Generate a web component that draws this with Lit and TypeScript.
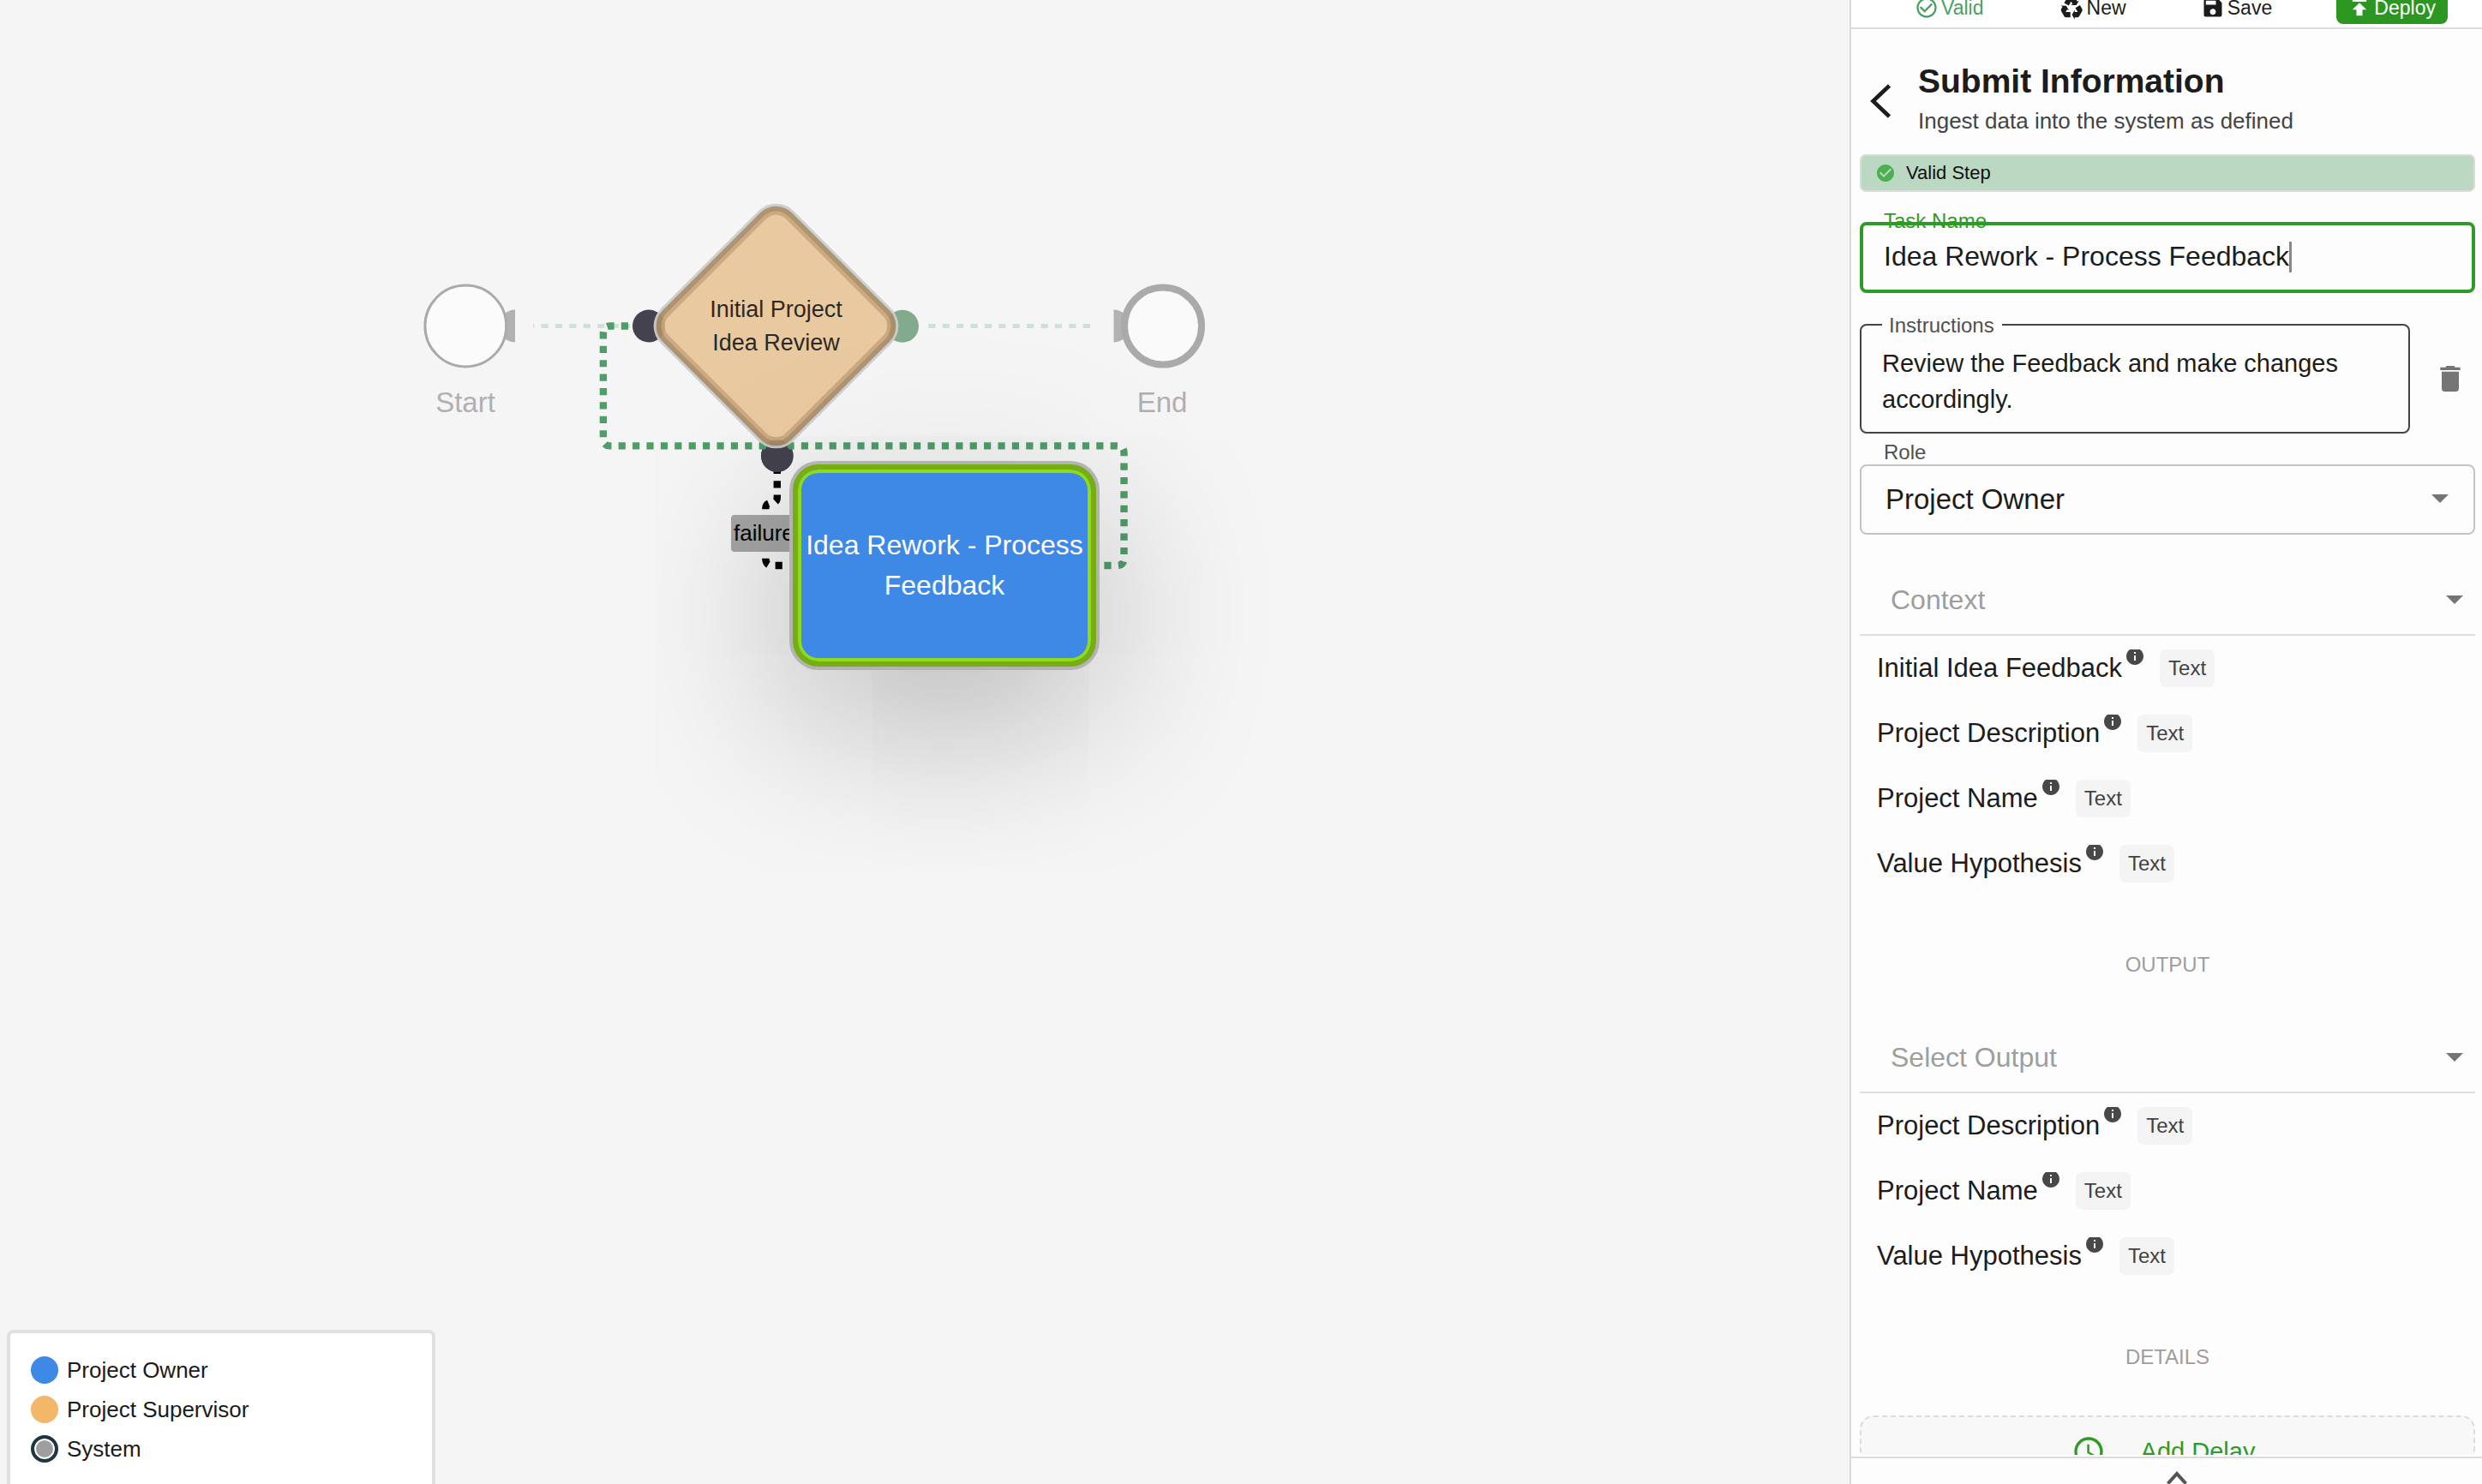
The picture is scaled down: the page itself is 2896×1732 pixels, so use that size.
import { LitElement, html, css, svg } from "lit";
import { customElement, property } from "lit/decorators.js";

const PATHS = {
  valid:
    "M16.59 7.58L10 14.17l-3.59-3.58L5 12l5 5 8-8zM12 2C6.48 2 2 6.48 2 12s4.48 10 10 10 10-4.48 10-10S17.52 2 12 2zm0 18c-4.42 0-8-3.58-8-8s3.58-8 8-8 8 3.58 8 8-3.58 8-8 8z",
  recycle:
    "M21.82 15.42L19.32 19.75C18.83 20.61 17.92 21.06 17 21H15V23L12.5 18.5L15 14V16H17.82L15.6 12.15L19.93 9.65L21.73 12.77C22.25 13.54 22.32 14.57 21.82 15.42M9.21 3.06H14.21C15.19 3.06 16.04 3.63 16.45 4.45L17.45 6.19L19.18 5.19L16.54 9.6L11.39 9.69L13.12 8.69L11.71 6.24L9.5 10.09L5.16 7.59L6.96 4.47C7.37 3.64 8.22 3.06 9.21 3.06M5.05 19.76L2.55 15.43C2.06 14.58 2.13 13.56 2.64 12.79L3.64 11.06L1.91 10.06L7.05 10.14L9.7 14.56L7.97 13.56L6.56 16H11V21H7.4C6.47 21.07 5.55 20.61 5.05 19.76Z",
  save:
    "M17 3H5c-1.11 0-2 .9-2 2v14c0 1.1.89 2 2 2h14c1.1 0 2-.9 2-2V7l-4-4zm-5 16c-1.66 0-3-1.34-3-3s1.34-3 3-3 3 1.34 3 3-1.34 3-3 3zm3-10H5V5h10v4z",
  deploy: "M5 4v2h14V4H5zm0 10h4v6h6v-6h4l-7-7-7 7z",
  check:
    "M12 2C6.48 2 2 6.48 2 12s4.48 10 10 10 10-4.48 10-10S17.52 2 12 2zm-2 15l-5-5 1.41-1.41L10 14.17l7.59-7.59L19 8l-9 9z",
  trash: "M6 19c0 1.1.9 2 2 2h8c1.1 0 2-.9 2-2V7H6v12zM19 4h-3.5l-1-1h-5l-1 1H5v2h14V4z",
  info:
    "M12 2C6.48 2 2 6.48 2 12s4.48 10 10 10 10-4.48 10-10S17.52 2 12 2zm1 15h-2v-6h2v6zm0-8h-2V7h2v2z",
  clock:
    "M11.99 2C6.47 2 2 6.48 2 12s4.47 10 9.99 10C17.52 22 22 17.52 22 12S17.52 2 11.99 2zM12 20c-4.42 0-8-3.58-8-8s3.58-8 8-8 8 3.58 8 8-3.58 8-8 8zm.5-13H11v6l5.25 3.15.75-1.23-4.5-2.67z",
};

const icon = (d: string, size: number) => html`
  <svg width=${size} height=${size} viewBox="0 0 24 24" fill="currentColor" aria-hidden="true">
    <path d=${d}></path>
  </svg>
`;

const base = css`
  *,
  *::before,
  *::after {
    box-sizing: border-box;
  }
  svg {
    display: block;
    flex: none;
  }
  button,
  input,
  select,
  textarea {
    font: inherit;
    color: inherit;
    margin: 0;
    padding: 0;
    border: 0;
    background: none;
    outline: none;
  }
`;

@customElement("flow-canvas")
export class FlowCanvas extends LitElement {
  static styles = [
    base,
    css`
      :host {
        display: block;
        position: relative;
        overflow: hidden;
        background: #f5f5f5;
      }
      .wires {
        position: absolute;
        inset: 0;
        width: 100%;
        height: 100%;
      }
      .wire {
        fill: none;
        stroke-dasharray: 8.2 8.2;
      }
      .faint {
        stroke: #d0e0d7;
        stroke-width: 5;
      }
      .success {
        stroke: #4f9d69;
        stroke-width: 8.4;
      }
      .failure {
        stroke: #000;
        stroke-width: 8.4;
      }
      .caption {
        position: absolute;
        top: 446px;
        width: 160px;
        text-align: center;
        font-size: 33px;
        line-height: 48px;
        color: #b0b0b0;
      }
      .start {
        left: 463px;
      }
      .end {
        left: 1276px;
      }
      .decision {
        position: absolute;
        left: 765px;
        top: 240px;
        width: 281px;
        height: 281px;
        display: grid;
        place-items: center;
      }
      .diamond {
        grid-area: 1 / 1;
        width: 213px;
        height: 213px;
        border-radius: 26px;
        border: 6px solid #ac8d68;
        background: #e9c79a;
        box-shadow:
          0 0 0 3px #cdcdcd,
          inset 0 0 0 4px #c9a67b;
        opacity: 0.94;
        transform: rotate(45deg);
      }
      .decision-text {
        grid-area: 1 / 1;
        z-index: 1;
        width: 170px;
        text-align: center;
        font-size: 27px;
        line-height: 39px;
        color: #2b2926;
      }
      .tag {
        position: absolute;
        left: 853px;
        top: 601px;
        padding: 0 3px;
        font-size: 26px;
        line-height: 43px;
        border-radius: 4px;
        background: #a6a6a6;
        color: #000;
      }
      .task {
        position: absolute;
        left: 925px;
        top: 542px;
        width: 354px;
        height: 236px;
        display: flex;
        align-items: center;
        justify-content: center;
        text-align: center;
        font-size: 32px;
        line-height: 47px;
        color: #fff;
        border: 6px solid #76ad12;
        border-radius: 30px;
        background: #3d89e5;
        box-shadow:
          inset 0 0 0 4px #8fdb1a,
          0 0 0 4px #b3b3b3,
          0 56px 200px rgba(0, 0, 0, 0.28);
      }
      .legend {
        position: absolute;
        left: 8px;
        bottom: -8px;
        width: 500px;
        margin: 0;
        padding: 20px 24px 22px;
        list-style: none;
        border: 4px solid #e0e0e0;
        border-radius: 8px;
        background: #fff;
        font-size: 26px;
        line-height: 46px;
        color: #1b1b1b;
      }
      .legend-row {
        display: flex;
        align-items: center;
        gap: 10px;
      }
      .dot {
        width: 32px;
        height: 32px;
        border-radius: 50%;
      }
      .owner {
        background: #3d89e5;
      }
      .supervisor {
        background: #f3b769;
      }
      .system {
        border: 4px solid #1f3541;
        background: #9e9e9e;
        box-shadow: inset 0 0 0 2px #fff;
      }
    `,
  ];

  render() {
    return html`
      <svg class="wires" aria-hidden="true">
        ${svg`
          <path class="wire faint" stroke-dashoffset="6.9" d="M622 380.5H735"></path>
          <path class="wire faint" d="M1083.3 380.6H1273"></path>
          <path fill="#b2b2b2" d="M601 361.5a19 19 0 0 0 0 38z"></path>
          <circle cx="543.3" cy="380.5" r="47.4" fill="#fbfbfb" stroke="#aaa" stroke-width="3"></circle>
          <path fill="#b2b2b2" d="M1299.5 361.5a19 19 0 0 1 0 38z"></path>
          <circle cx="1357" cy="380.5" r="45" fill="#fafafa" stroke="#aaa" stroke-width="8"></circle>
          <circle cx="757" cy="380.5" r="19" fill="#45424f"></circle>
          <circle cx="1053" cy="380.7" r="19" fill="#82ab8e"></circle>
          <circle cx="906.8" cy="532" r="19.5" fill="#45424f" stroke="#fff" stroke-width="1"></circle>
          <path
            class="wire success"
            d="M1272 660H1303.3Q1311.5 660 1311.5 651.8V528.6Q1311.5 520.4 1303.3 520.4H712.1Q703.9 520.4 703.9 512.2V388.7Q703.9 380.5 712.1 380.5H738"
          ></path>
          <path
            class="wire failure"
            d="M906.8 544.8V580.3Q906.8 587 900 587Q893.3 587 893.3 593.7V651.8Q893.3 660 901.5 660H940"
          ></path>
          <circle cx="906.8" cy="534" r="17" fill="#45424f"></circle>
        `}
      </svg>
      <div class="caption start">Start</div>
      <div class="caption end">End</div>
      <div class="decision">
        <div class="diamond"></div>
        <div class="decision-text">Initial Project Idea Review</div>
      </div>
      <div class="tag">failure</div>
      <div class="task">Idea Rework - Process Feedback</div>
      <ul class="legend">
        <li class="legend-row"><span class="dot owner"></span>Project Owner</li>
        <li class="legend-row"><span class="dot supervisor"></span>Project Supervisor</li>
        <li class="legend-row"><span class="dot system"></span>System</li>
      </ul>
    `;
  }
}

@customElement("variable-list")
export class VariableList extends LitElement {
  @property({ attribute: false }) items: string[] = [];

  static styles = [
    base,
    css`
      :host {
        display: block;
      }
      .list {
        display: flex;
        flex-direction: column;
        gap: 32px;
        margin: 0;
        padding: 16px 20px 0;
        list-style: none;
      }
      .row {
        display: flex;
        align-items: center;
        height: 44px;
        font-size: 31px;
        color: #1c1c1c;
      }
      .info {
        align-self: flex-start;
        margin: 0 19px 0 5px;
        color: #484848;
      }
      .chip {
        padding: 0 10px;
        border-radius: 7px;
        background: #f4f4f5;
        color: #424242;
        font-size: 24px;
        line-height: 44px;
      }
    `,
  ];

  render() {
    return html`
      <ul class="list">
        ${this.items.map(
          (name) => html`
            <li class="row">
              <span>${name}</span>
              <svg class="info" width="20" height="18" viewBox="2 4 20 18" fill="currentColor" aria-hidden="true">
                <path d=${PATHS.info}></path>
              </svg>
              <span class="chip">Text</span>
            </li>
          `,
        )}
      </ul>
    `;
  }
}

@customElement("step-panel")
export class StepPanel extends LitElement {
  static styles = [
    base,
    css`
      :host {
        display: flex;
        flex-direction: column;
        min-height: 0;
        border-left: 2px solid #dcdcdc;
        background: #fdfdfd;
        color: #1c1c1c;
      }
      .toolbar {
        flex: none;
        display: flex;
        justify-content: space-between;
        align-items: flex-end;
        height: 34px;
        padding: 0 40px 4px 62px;
        overflow: hidden;
        border-bottom: 2px solid #dcdcdc;
        background: #fff;
        font-size: 23px;
      }
      .tool {
        display: flex;
        align-items: center;
        gap: 3px;
        height: 38px;
        padding: 0 12px;
        border-radius: 8px;
      }
      .tool.valid {
        color: #4a9f63;
      }
      .tool.deploy {
        padding: 0 14px 0 13px;
        background: #2b9720;
        color: #fff;
      }
      .body {
        flex: 1;
        min-height: 0;
        overflow: hidden;
        padding: 38px 8px 0 10px;
      }
      .header {
        display: grid;
        grid-template-columns: 68px 1fr;
        align-items: center;
      }
      .back {
        padding: 0 0 0 10px;
        justify-self: start;
      }
      .title {
        margin: 0;
        font-size: 39px;
        line-height: 46px;
        font-weight: 700;
      }
      .subtitle {
        margin: 0;
        font-size: 26px;
        line-height: 46px;
        color: #444;
      }
      .banner {
        display: flex;
        align-items: center;
        gap: 12px;
        height: 44px;
        margin-top: 16px;
        padding: 0 16px;
        border: 2px solid #d9dcd9;
        border-radius: 7px;
        background: #bad8c2;
        color: #111;
        font-size: 22px;
      }
      .banner svg {
        color: #4caf50;
      }
      .field {
        position: relative;
      }
      .label {
        font-size: 24px;
        line-height: 28px;
        color: #505050;
      }
      .name {
        z-index: 0;
        display: flex;
        align-items: center;
        height: 83px;
        margin-top: 35px;
        padding: 0 24px 2px;
        border: 4px solid #2f9a26;
        border-radius: 8px;
        font-size: 32px;
      }
      .name .label {
        position: absolute;
        left: 24px;
        top: -19px;
        color: #2f9a26;
        z-index: -1;
      }
      .name input {
        field-sizing: content;
        max-width: 100%;
      }
      .caret {
        width: 3px;
        height: 36px;
        background: #888;
      }
      .split {
        display: grid;
        grid-template-columns: 1fr 76px;
        align-items: center;
        margin-top: 36px;
      }
      .notes {
        padding: 23px 24px 17px;
        border: 2px solid #444;
        border-radius: 8px;
      }
      .notes .label {
        position: absolute;
        left: 24px;
        top: -14px;
        padding: 0 9px 0 8px;
        background: #fdfdfd;
      }
      .notes textarea {
        display: block;
        width: 100%;
        height: 84px;
        font-size: 29px;
        line-height: 42px;
        resize: none;
        overflow: hidden;
      }
      .trash {
        display: grid;
        justify-items: center;
        justify-self: end;
        width: 58px;
        color: #757575;
      }
      .role-label {
        display: block;
        padding-left: 28px;
        margin-top: 8px;
      }
      .picker {
        display: grid;
        align-items: center;
      }
      .picker select {
        grid-area: 1 / 1;
        appearance: none;
        width: 100%;
        height: 100%;
      }
      .picker svg {
        grid-area: 1 / 1;
        justify-self: end;
        pointer-events: none;
        color: #757575;
      }
      .boxed {
        height: 82px;
        padding: 0 29px 2px 28px;
        border: 2px solid #c4c4c4;
        border-radius: 8px;
        font-size: 33px;
      }
      .lined {
        height: 86px;
        padding: 3px 14px 0 36px;
        border-bottom: 2px solid #dedede;
        font-size: 32px;
        color: #9e9e9e;
      }
      .context {
        margin-top: 32px;
      }
      .section {
        margin: 0;
        padding: 82px 0 50px;
        text-align: center;
        font-size: 24px;
        line-height: 28px;
        font-weight: 400;
        color: #9e9e9e;
      }
      .delay {
        display: flex;
        align-items: center;
        justify-content: center;
        gap: 41px;
        width: 100%;
        height: 84px;
        margin-top: 4px;
        padding-right: 10px;
        border: 2px dashed #dcdcdc;
        border-radius: 16px;
        background: #f8f8f8;
        color: #2f9a26;
        font-size: 29px;
      }
      .footer {
        flex: none;
        display: flex;
        justify-content: center;
        height: 32px;
        padding: 15px 0 0 24px;
        margin-top: 2px;
        overflow: hidden;
        border-top: 2px solid #dcdcdc;
        color: #555;
      }
    `,
  ];

  private arrow() {
    return html`
      <svg width="20" height="10" viewBox="0 0 20 10" fill="currentColor" aria-hidden="true">
        <path d="M0 0H20L10 10Z"></path>
      </svg>
    `;
  }

  render() {
    return html`
      <div class="toolbar">
        <button class="tool valid">${icon(PATHS.valid, 28)}Valid</button>
        <button class="tool">${icon(PATHS.recycle, 30)}New</button>
        <button class="tool">${icon(PATHS.save, 28)}Save</button>
        <button class="tool deploy">${icon(PATHS.deploy, 28)}Deploy</button>
      </div>
      <div class="body">
        <header class="header">
          <button class="back" aria-label="Back">
            <svg width="28" height="42" viewBox="0 0 28 42" fill="none" stroke="#1c1c1c" stroke-width="4.6">
              <path d="M24.5 3L5.5 21L24.5 39"></path>
            </svg>
          </button>
          <div>
            <h1 class="title">Submit Information</h1>
            <p class="subtitle">Ingest data into the system as defined</p>
          </div>
        </header>
        <div class="banner">${icon(PATHS.check, 24)}Valid Step</div>
        <div class="field name">
          <label class="label" for="task-name">Task Name</label>
          <input id="task-name" type="text" value="Idea Rework - Process Feedback" />
          <span class="caret"></span>
        </div>
        <div class="split">
          <div class="field notes">
            <label class="label" for="instructions">Instructions</label>
            <textarea id="instructions" .value=${"Review the Feedback and make changes accordingly."}></textarea>
          </div>
          <button class="trash" aria-label="Delete">${icon(PATHS.trash, 40)}</button>
        </div>
        <label class="label role-label" for="role">Role</label>
        <div class="picker boxed">
          <select id="role">
            <option>Project Owner</option>
            <option>Project Supervisor</option>
          </select>
          ${this.arrow()}
        </div>
        <div class="picker lined context">
          <select aria-label="Context">
            <option>Context</option>
          </select>
          ${this.arrow()}
        </div>
        <variable-list
          .items=${["Initial Idea Feedback", "Project Description", "Project Name", "Value Hypothesis"]}
        ></variable-list>
        <h2 class="section">OUTPUT</h2>
        <div class="picker lined">
          <select aria-label="Output">
            <option>Select Output</option>
          </select>
          ${this.arrow()}
        </div>
        <variable-list .items=${["Project Description", "Project Name", "Value Hypothesis"]}></variable-list>
        <h2 class="section">DETAILS</h2>
        <button class="delay">${icon(PATHS.clock, 40)}Add Delay</button>
      </div>
      <div class="footer">
        <svg width="24" height="24" viewBox="0 0 24 24" fill="none" stroke="currentColor" stroke-width="4">
          <path d="M1.5 14.5L12 3L22.5 14.5"></path>
        </svg>
      </div>
    `;
  }
}

@customElement("app-root")
export class AppRoot extends LitElement {
  static styles = css`
    :host {
      display: grid;
      grid-template-columns: minmax(0, 1fr) 738px;
      grid-template-rows: minmax(0, 1fr);
      height: 100vh;
      overflow: hidden;
      font-family: "Liberation Sans", Arial, Helvetica, sans-serif;
    }
  `;

  render() {
    return html`
      <flow-canvas></flow-canvas>
      <step-panel></step-panel>
    `;
  }
}
